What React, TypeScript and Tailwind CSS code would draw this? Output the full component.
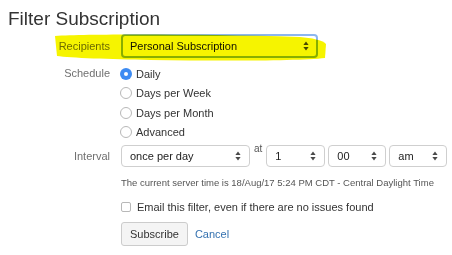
import React from "react";

const Arrows = () => (
  <svg width="6" height="10" viewBox="0 0 6 10" className="shrink-0">
    <path d="M3 0.5 L5.6 4 H0.4 Z" fill="#4a4a4a" />
    <path d="M3 9.5 L5.6 6 H0.4 Z" fill="#4a4a4a" />
  </svg>
);

const Select = ({ value, className = "" }: { value: string; className?: string }) => (
  <div
    className={`flex items-center justify-between bg-white border border-[#cfcfcf] rounded-[4px] pl-[8px] pr-[8px] text-[11px] text-[#222] ${className}`}
  >
    <span>{value}</span>
    <Arrows />
  </div>
);

const Radio = ({ checked, label }: { checked?: boolean; label: string }) => (
  <div className="flex items-center h-[19.5px] gap-[4px]">
    {checked ? (
      <span className="w-[12px] h-[12px] rounded-full bg-[#3d8bf2] flex items-center justify-center">
        <span className="w-[4px] h-[4px] rounded-full bg-white" />
      </span>
    ) : (
      <span className="w-[12px] h-[12px] rounded-full border border-[#b8b8b8] bg-white" />
    )}
    <span className="text-[11px] text-[#333]">{label}</span>
  </div>
);

const Label = ({ children, className = "" }: { children: React.ReactNode; className?: string }) => (
  <div className={`w-[121px] shrink-0 pr-[11px] text-right text-[11px] text-[#707070] ${className}`}>{children}</div>
);

export default function App() {
  return (
    <div
      className="relative w-[452px] h-[255px] bg-white overflow-hidden"
      style={{ fontFamily: '"Liberation Sans", Arial, sans-serif' }}
    >
      <div className="pt-[8px]">
        <h1 className="pl-[8px] text-[19px] leading-[22px] text-[#333]">Filter Subscription</h1>

        {/* Recipients */}
        <div className="flex items-center mt-[4px]">
          <Label>Recipients</Label>
          <div className="flex items-center justify-between w-[197px] h-[24px] bg-white border-2 border-[#8cb6f0] rounded-[4px] pl-[7px] pr-[7px] text-[11px] text-[#111]">
            <span>Personal Subscription</span>
            <Arrows />
          </div>
        </div>

        {/* Schedule */}
        <div className="flex mt-[6px]">
          <Label className="leading-[19.5px]">Schedule</Label>
          <div className="flex flex-col -ml-[1px]">
            <Radio checked label="Daily" />
            <Radio label="Days per Week" />
            <Radio label="Days per Month" />
            <Radio label="Advanced" />
          </div>
        </div>

        {/* Interval */}
        <div className="flex items-center mt-[3px]">
          <Label>Interval</Label>
          <div className="flex items-start gap-[3px]">
            <Select value="once per day" className="w-[129px] h-[22px]" />
            <span className="text-[10px] text-[#555] leading-[10px] -mt-[1px] px-[1px]">at</span>
            <Select value="1" className="w-[59px] h-[22px]" />
            <Select value="00" className="w-[58px] h-[22px]" />
            <Select value="am" className="w-[58px] h-[22px]" />
          </div>
        </div>

        <div className="pl-[121px] mt-[10px] text-[9.5px] leading-[12px] text-[#555]">
          The current server time is 18/Aug/17 5:24 PM CDT - Central Daylight Time
        </div>

        <div className="flex items-center gap-[6px] pl-[121px] mt-[11px] h-[14px]">
          <span className="w-[10px] h-[10px] rounded-[2px] border border-[#b8b8b8] bg-white" />
          <span className="text-[11px] text-[#333]">Email this filter, even if there are no issues found</span>
        </div>

        <div className="flex items-center gap-[7px] pl-[121px] mt-[8px]">
          <button className="h-[24px] px-[8px] bg-[#f4f4f4] border border-[#cccccc] rounded-[3px] text-[11px] text-[#333]">
            Subscribe
          </button>
          <a className="text-[11px] text-[#3572b0]">Cancel</a>
        </div>
      </div>

      {/* highlighter stroke over the recipients row */}
      <svg
        className="absolute left-0 top-0 pointer-events-none mix-blend-multiply"
        width="452"
        height="255"
        viewBox="0 0 452 255"
      >
        <path
          d="M55 36 C90 34 200 34 300 37 C312 38 322 40 326 44 L325 58 C300 61 220 61 150 60 C110 59 70 58 57 56 Z"
          fill="#f6f400"
        />
      </svg>
    </div>
  );
}
